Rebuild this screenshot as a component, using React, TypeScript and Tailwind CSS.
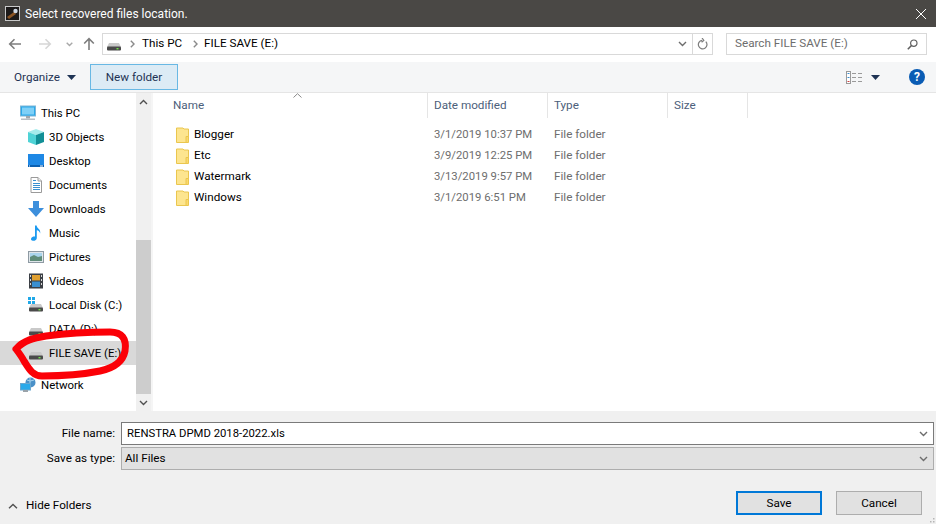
import React from "react";

const font = { fontFamily: 'Roboto, "Noto Sans", sans-serif' };

function Drive({ win }: { win?: boolean }) {
  return (
    <svg width="16" height="16" viewBox="0 0 16 16">
      {win && (
        <g fill="#1fa8e8">
          <rect x="0" y="0" width="3" height="3" />
          <rect x="4" y="0" width="3" height="3" />
          <rect x="0" y="4" width="3" height="3" />
          <rect x="4" y="4" width="3" height="3" />
        </g>
      )}
      <path d="M3 7 h10 l2 4 H1 z" fill="#c9c9c9" />
      <rect x="1" y="10.5" width="14" height="4" rx="1" fill="#4a4a4a" />
      <rect x="10.5" y="12" width="2" height="1.4" fill="#6fe04a" />
    </svg>
  );
}

function Monitor() {
  return (
    <svg width="16" height="16" viewBox="0 0 16 16">
      <rect x="0.5" y="1" width="15" height="10" fill="#29a9ea" stroke="#7fb5d6" strokeWidth="1" />
      <rect x="2" y="2.5" width="12" height="7" fill="#7fd0f7" />
      <rect x="6" y="11" width="4" height="2.5" fill="#a0a8ae" />
      <rect x="1" y="13.5" width="14" height="1.5" fill="#b7bec4" />
    </svg>
  );
}

function Cube() {
  return (
    <svg width="16" height="16" viewBox="0 0 16 16">
      <path d="M8 0 L16 3 L8 6 L0 3 z" fill="#a5ecec" />
      <path d="M0 3 L8 6 V16 L0 13 z" fill="#4fd3d6" />
      <path d="M16 3 L8 6 V16 L16 13 z" fill="#118f96" />
    </svg>
  );
}

function Desktop() {
  return (
    <svg width="16" height="16" viewBox="0 0 16 16">
      <rect x="0" y="1" width="16" height="12" fill="#1e88e5" />
      <rect x="0" y="12" width="16" height="2" fill="#0b5fb0" />
      <rect x="1" y="12.5" width="1" height="1" fill="#fff" />
      <rect x="12" y="12.5" width="3" height="1" fill="#fff" />
    </svg>
  );
}

function Doc() {
  return (
    <svg width="16" height="16" viewBox="0 0 16 16">
      <path d="M3 0.5 H10 L13.5 4 V15.5 H3 z" fill="#fff" stroke="#9a9a9a" />
      <path d="M10 0.5 V4 H13.5" fill="#eee" stroke="#9a9a9a" />
      <g stroke="#3a8fd0">
        <path d="M5 3.5 H8" />
        <path d="M5 6.5 H12" />
        <path d="M5 8.5 H12" />
        <path d="M5 10.5 H12" />
        <path d="M5 12.5 H12" />
      </g>
    </svg>
  );
}

function Downloads() {
  return (
    <svg width="16" height="16" viewBox="0 0 16 16">
      <path d="M5 0 H11 V7 H16 L8 16 L0 7 H5 z" fill="#3d8fdc" />
    </svg>
  );
}

function Music() {
  return (
    <svg width="16" height="16" viewBox="0 0 16 16">
      <path d="M7 0.5 h1.6 c0.3 3 4.4 3.6 3.6 8 c-0.4 -2 -1.8 -3 -3.4 -3.3 V13 c0 2 -2 3 -3.8 2.8 C3.4 15.6 2.6 14.4 3.2 13.2 C3.8 12 5.6 11.3 7 11.6 z" fill="#1b9af0" />
    </svg>
  );
}

function Pictures() {
  return (
    <svg width="16" height="16" viewBox="0 0 16 16">
      <rect x="0.5" y="2.5" width="15" height="11" fill="#dfe6ea" stroke="#8e9aa3" />
      <rect x="2" y="4" width="12" height="4" fill="#a9d4ec" />
      <path d="M2 8 L6 6 L10 8 L14 7 V12 H2 z" fill="#5f8d7a" />
    </svg>
  );
}

function Videos() {
  return (
    <svg width="16" height="16" viewBox="0 0 16 16">
      <rect x="1" y="0.5" width="14" height="15" fill="#3b3f45" />
      <rect x="4" y="2" width="8" height="5.5" fill="#e0a030" />
      <rect x="4" y="8.5" width="8" height="5.5" fill="#3a8fd0" />
      <g fill="#d8d8d8">
        <rect x="2" y="2" width="1" height="2" />
        <rect x="2" y="6" width="1" height="2" />
        <rect x="2" y="10" width="1" height="2" />
        <rect x="13" y="2" width="1" height="2" />
        <rect x="13" y="6" width="1" height="2" />
        <rect x="13" y="10" width="1" height="2" />
      </g>
    </svg>
  );
}

function NetworkIcon() {
  return (
    <svg width="16" height="16" viewBox="0 0 16 16">
      <circle cx="10.5" cy="5.5" r="5" fill="#4a90c8" />
      <path d="M7 3 Q10 5 14 3 M10 1 V10" stroke="#a8d4ee" fill="none" />
      <rect x="0.5" y="6.5" width="10" height="6.5" fill="#29a9ea" stroke="#6aa7cf" />
      <rect x="3" y="13" width="5" height="2" fill="#9aa3aa" />
    </svg>
  );
}

function Folder() {
  return (
    <svg width="13" height="16" viewBox="0 0 13 16" className="shrink-0">
      <path d="M0.5 1 H7 L8 2 H12.5 V15.5 H0.5 z" fill="#fde58f" stroke="#eac64e" />
      <path d="M10 15 V9.5 H12.5 V15" fill="#fbd96d" stroke="#eac64e" />
    </svg>
  );
}

function Chev({ d = "M1 1 L4.5 4.5 L8 1", color = "#6d6d6d", w = 9, h = 6 }: { d?: string; color?: string; w?: number; h?: number }) {
  return (
    <svg width={w} height={h} viewBox={`0 0 ${w} ${h}`} className="shrink-0">
      <path d={d} fill="none" stroke={color} strokeWidth="1.4" />
    </svg>
  );
}

function Caret() {
  return (
    <svg width="9" height="5" viewBox="0 0 9 5" className="shrink-0">
      <path d="M0 0 H9 L4.5 5 z" fill="#1e3354" />
    </svg>
  );
}

const navItems: { label: string; icon: React.ReactNode; top?: boolean; selected?: boolean; gap?: boolean }[] = [
  { label: "This PC", icon: <Monitor />, top: true },
  { label: "3D Objects", icon: <Cube /> },
  { label: "Desktop", icon: <Desktop /> },
  { label: "Documents", icon: <Doc /> },
  { label: "Downloads", icon: <Downloads /> },
  { label: "Music", icon: <Music /> },
  { label: "Pictures", icon: <Pictures /> },
  { label: "Videos", icon: <Videos /> },
  { label: "Local Disk (C:)", icon: <Drive win /> },
  { label: "DATA (D:)", icon: <Drive /> },
  { label: "FILE SAVE (E:)", icon: <Drive />, selected: true },
  { label: "Network", icon: <NetworkIcon />, top: true, gap: true },
];

const files = [
  { name: "Blogger", date: "3/1/2019 10:37 PM" },
  { name: "Etc", date: "3/9/2019 12:25 PM" },
  { name: "Watermark", date: "3/13/2019 9:57 PM" },
  { name: "Windows", date: "3/1/2019 6:51 PM" },
];

export default function App() {
  return (
    <div style={font} className="relative flex h-[524px] w-[936px] flex-col overflow-hidden bg-white text-[11.7px] leading-none text-[#000]">
      {/* title bar */}
      <div className="flex h-[27px] shrink-0 items-center bg-[#4a4845] pl-[5px] pr-[8px] text-white">
        <svg width="15" height="15" viewBox="0 0 15 15" className="shrink-0">
          <rect x="0.5" y="0.5" width="14" height="14" fill="#1c1a1a" stroke="#c8c8c8" />
          <path d="M2 11 L9 6 L11 8 L4 13 z" fill="#8a5424" />
          <circle cx="10.5" cy="5" r="2.2" fill="#cfd8e4" />
        </svg>
        <span className="ml-[5px] text-[12px]">Select recovered files location.</span>
        <svg width="12" height="12" viewBox="0 0 12 12" className="ml-auto mr-[1px]">
          <path d="M1 1 L11 11 M11 1 L1 11" stroke="#fff" strokeWidth="1" />
        </svg>
      </div>

      {/* nav row */}
      <div className="flex h-[35px] shrink-0 items-center bg-white pb-[1px]">
        <svg width="14" height="12" viewBox="0 0 14 12" className="ml-[8px]">
          <path d="M13 6 H2 M6.5 1.2 L1.7 6 L6.5 10.8" fill="none" stroke="#7d7d7d" strokeWidth="1.6" />
        </svg>
        <svg width="14" height="12" viewBox="0 0 14 12" className="ml-[16px]">
          <path d="M1 6 H12 M7.5 1.2 L12.3 6 L7.5 10.8" fill="none" stroke="#d6d6d6" strokeWidth="1.6" />
        </svg>
        <div className="ml-[14px]">
          <Chev w={7} h={5} d="M0.7 0.7 L3.5 3.5 L6.3 0.7" color="#a8a8a8" />
        </div>
        <svg width="12" height="14" viewBox="0 0 12 14" className="ml-[10px]">
          <path d="M6 13 V2 M1.2 6.5 L6 1.7 L10.8 6.5" fill="none" stroke="#7d7d7d" strokeWidth="1.6" />
        </svg>
        <div className="ml-[7px] flex h-[22px] w-[611px] items-center border border-[#d9d9d9] bg-white pl-[3px]">
          <Drive />
          <div className="ml-[8px]">
            <Chev w={5} h={8} d="M0.8 0.8 L4 4 L0.8 7.2" color="#8a8a8a" />
          </div>
          <span className="ml-[7px] w-[42px]">This PC</span>
          <div className="ml-[9px]">
            <Chev w={5} h={8} d="M0.8 0.8 L4 4 L0.8 7.2" color="#8a8a8a" />
          </div>
          <span className="ml-[6px]">FILE SAVE (E:)</span>
          <div className="ml-auto flex h-full items-center">
            <Chev color="#6d6d6d" />
            <div className="ml-[5px] flex h-full w-[20px] items-center justify-center border-l border-[#d9d9d9]">
              <svg width="11" height="12" viewBox="0 0 11 12">
                <path d="M8.8 3.6 A4.3 4.3 0 1 1 5 2.3 M5 0 L6.8 2.3 L4.6 4.2" fill="none" stroke="#7d7d7d" strokeWidth="1.2" />
              </svg>
            </div>
          </div>
        </div>
        <div className="ml-[13px] flex h-[22px] w-[201px] items-center justify-between border border-[#d9d9d9] bg-white pl-[8px] pr-[8px] text-[#6d6d6d]">
          <span>Search FILE SAVE (E:)</span>
          <svg width="11" height="11" viewBox="0 0 11 11">
            <circle cx="6.8" cy="4.2" r="3.2" fill="none" stroke="#5f5f5f" strokeWidth="1.2" />
            <path d="M4.5 6.5 L0.8 10.2" stroke="#5f5f5f" strokeWidth="1.6" />
          </svg>
        </div>
      </div>

      {/* toolbar */}
      <div className="flex h-[31px] shrink-0 items-center border-b border-[#e5e5e5] bg-[#f5f6f7] pl-[14px]">
        <span className="w-[47px] pt-[1px] text-[#1e3354]">Organize</span>
        <div className="ml-[6px]">
          <Caret />
        </div>
        <div className="ml-[14px] flex h-[26px] w-[88px] items-center justify-center border border-[#68b8e4] bg-[#dcebf5] pt-[1px] text-[#1e3354]">
          New folder
        </div>
        <svg width="17" height="13" viewBox="0 0 17 13" className="ml-auto">
          <rect x="0.5" y="0.5" width="4" height="12" fill="#fff" stroke="#9a9a9a" />
          <path d="M1.5 2.5 H3.5" stroke="#3a8fd0" />
          <path d="M1.5 6.5 H3.5" stroke="#3a8fd0" />
          <path d="M1.5 10.5 H3.5" stroke="#d04040" />
          <path d="M6 2.5 H10 M12 2.5 H16 M6 6.5 H10 M12 6.5 H16 M6 10.5 H10 M12 10.5 H16" stroke="#9a9a9a" />
        </svg>
        <div className="ml-[8px]">
          <Caret />
        </div>
        <div className="ml-[29px] mr-[11px] flex h-[16px] w-[16px] items-center justify-center rounded-full bg-[#0a5cb4] text-[12px] font-bold text-white">
          ?
        </div>
      </div>

      {/* main */}
      <div className="flex min-h-0 flex-1">
        {/* sidebar */}
        <div className="w-[136px] shrink-0 pt-[8px]">
          {navItems.map((it) => (
            <div
              key={it.label}
              className={`flex h-[24px] items-center ${it.top ? "pl-[20px]" : "pl-[28px]"} ${it.selected ? "bg-[#d9d9d9]" : ""} ${it.gap ? "mt-[8px]" : ""}`}
            >
              <span className="flex h-[16px] w-[16px] shrink-0 items-center justify-center">{it.icon}</span>
              <span className="ml-[5px] whitespace-nowrap pt-[1px] text-[11.4px]">{it.label}</span>
            </div>
          ))}
        </div>
        {/* scrollbar */}
        <div className="flex w-[15px] shrink-0 flex-col bg-[#f0f0f0]">
          <div className="flex h-[17px] items-center justify-center">
            <Chev w={9} h={6} d="M1 5 L4.5 1.5 L8 5" color="#505050" />
          </div>
          <div className="flex-1" />
          <div className="h-[154px] bg-[#cdcdcd]" />
          <div className="flex h-[17px] items-center justify-center">
            <Chev color="#505050" />
          </div>
        </div>
        {/* list */}
        <div className="relative min-w-0 flex-1 border-l-2 border-[#f5f5f5]">
          <div className="flex h-[25px] text-[#4c607a]">
            <div className="flex w-[275px] items-center border-r border-[#e5e5e5] pl-[20px] pt-[1px]">Name</div>
            <div className="flex w-[120px] items-center border-r border-[#e5e5e5] pl-[6px] pt-[1px]">Date modified</div>
            <div className="flex w-[120px] items-center border-r border-[#e5e5e5] pl-[6px] pt-[1px]">Type</div>
            <div className="flex w-[80px] items-center border-r border-[#e5e5e5] pl-[6px] pt-[1px]">Size</div>
          </div>
          <svg width="9" height="5" viewBox="0 0 9 5" className="absolute left-[140px] top-[0px]">
            <path d="M0.5 4.5 L4.5 0.7 L8.5 4.5" fill="none" stroke="#8a8a8a" />
          </svg>
          <div className="pt-[6px]">
            {files.map((f) => (
              <div key={f.name} className="flex h-[21px] items-center">
                <div className="flex w-[281px] items-center pl-[23px]">
                  <Folder />
                  <span className="ml-[5px] pt-[1px]">{f.name}</span>
                </div>
                <div className="w-[120px] pt-[1px] text-[11.3px] text-[#6d6d6d]">{f.date}</div>
                <div className="pt-[1px] text-[#6d6d6d]">File folder</div>
              </div>
            ))}
          </div>
        </div>
      </div>

      {/* bottom */}
      <div className="relative flex h-[113px] shrink-0 flex-col bg-[#f0f0f0] pt-[11px]">
        <div className="flex h-[23px] items-center">
          <div className="w-[115px] text-right">File name:</div>
          <div className="ml-[6px] flex h-[23px] w-[813px] items-center justify-between border border-[#7a7a7a] bg-white pl-[5px] pr-[5px]">
            <span className="text-[11.3px]">RENSTRA DPMD 2018-2022.xls</span>
            <Chev />
          </div>
        </div>
        <div className="mt-[2px] flex h-[23px] items-center">
          <div className="w-[115px] text-right">Save as type:</div>
          <div className="ml-[6px] flex h-[23px] w-[813px] items-center justify-between border border-[#adadad] bg-[#e1e1e1] pl-[3px] pr-[5px]">
            <span>All Files</span>
            <Chev />
          </div>
        </div>
        <div className="mt-[21px] flex items-center">
          <div className="ml-[8px] mt-[5px]">
            <Chev w={10} h={6} d="M1 5.2 L5 1.5 L9 5.2" color="#505050" />
          </div>
          <span className="ml-[8px] mt-[5px]">Hide Folders</span>
          <div className="ml-auto mr-[14px] flex gap-[14px]">
            <div className="flex h-[24px] w-[86px] items-center justify-center border-2 border-[#0078d7] bg-[#e1e1e1] pt-[1px]">Save</div>
            <div className="flex h-[24px] w-[86px] items-center justify-center border border-[#adadad] bg-[#e1e1e1] pt-[1px]">Cancel</div>
          </div>
        </div>
        <svg width="8" height="8" viewBox="0 0 8 8" className="absolute bottom-[1px] right-[1px]">
          <g fill="#b5b5b5">
            <rect x="6" y="6" width="1.5" height="1.5" />
            <rect x="3" y="6" width="1.5" height="1.5" />
            <rect x="6" y="3" width="1.5" height="1.5" />
          </g>
        </svg>
      </div>

      {/* red hand-drawn annotation over the screenshot */}
      <svg width="140" height="60" viewBox="0 0 140 60" className="absolute left-0 top-[325px]" style={{ pointerEvents: "none" }}>
        <path
          d="M16 24 C24 15 34 13 46 11 C68 8 92 7 110 7 C122 7 127 14 125 26 C123 36 114 43 100 46 C80 50 56 51 42 51 C32 51 28 42 24 36 C22 32 19 28 16 24"
          fill="none"
          stroke="#fb0007"
          strokeWidth="7"
          strokeLinecap="round"
        />
      </svg>
    </div>
  );
}
